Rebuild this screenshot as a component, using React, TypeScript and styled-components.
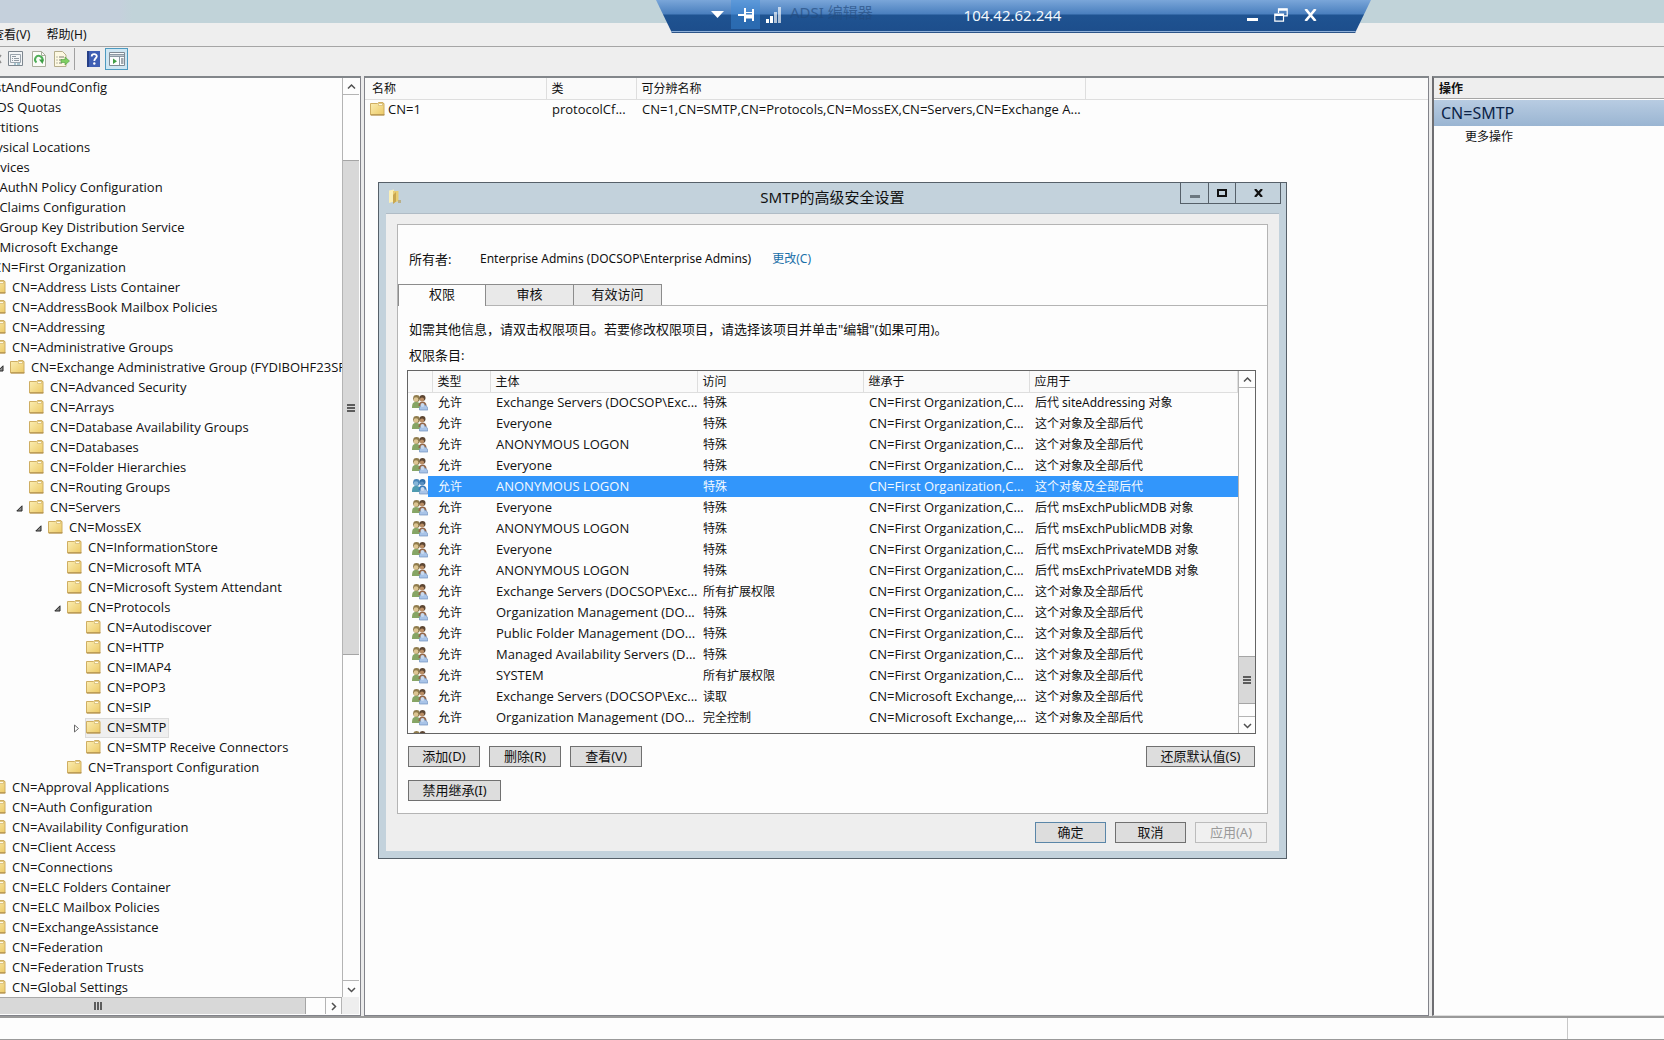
import React from 'react';
import styled, { createGlobalStyle, css } from 'styled-components';

const uiFont = `"Noto Sans", "Noto Sans CJK SC", sans-serif`;
const latinFont = `"Open Sans", "Noto Sans CJK SC", sans-serif`;

const GlobalStyle = createGlobalStyle`
  *, *::before, *::after { box-sizing: border-box; }
  body { margin: 0; background: #fdfdfd; color: #111; font: 12px/20px ${uiFont}; overflow: hidden; }
  button { font: inherit; color: inherit; padding: 0; margin: 0; border: 0; background: none; border-radius: 0; }
`;

const latinText = css`
  font-family: ${latinFont};
  font-size: 13px;
  line-height: 18px;
`;

/* ---------- application frame ---------- */

const Page = styled.div`
  position: relative;
  display: flex;
  flex-direction: column;
  height: 100vh;
  overflow: hidden;
`;

const TitleStrip = styled.div`
  flex: none;
  height: 23px;
  background: linear-gradient(90deg, #c5d0dc 0, #c5d0dc 120px, #c1d3d9 132px);
`;

const MenuBar = styled.nav`
  flex: none;
  display: flex;
  gap: 16px;
  height: 24px;
  padding-bottom: 1px;
  margin-left: -8px;
  background: #eeeeee;
  border-bottom: 1px solid #a5a5a5;
`;

const MenuItem = styled.button`
  line-height: 23px;
  white-space: nowrap;
`;

const ToolBar = styled.div`
  flex: none;
  display: flex;
  align-items: center;
  height: 29px;
  padding-bottom: 5px;
  background: #eeeeee;
`;

const Tool = styled.button<{ $active?: boolean; $w?: number }>`
  flex: none;
  display: flex;
  align-items: center;
  justify-content: center;
  width: ${p => p.$w ?? 23}px;
  height: 22px;
  ${p => p.$active && css`
    background: #cfe6f2;
    border: 1px solid #4d9ac0;
  `}
`;

const ToolDivider = styled.div`
  width: 1px;
  height: 22px;
  margin: 0 7px 0 1px;
  background: #a0a0a0;
`;

const Workspace = styled.div`
  flex: 1;
  min-height: 0;
  display: flex;
  gap: 3px;
  background: #ebebeb;
`;

const Pane = styled.section`
  display: flex;
  flex-direction: column;
  min-width: 0;
  background: #fdfdfd;
  border: 1px solid #82838a;
  border-top: 2px solid #82868a;
`;

const TreePane = styled(Pane)`
  flex: none;
  width: 361px;
  border-left: 0;
  padding-right: 1px;
`;

const ListPane = styled(Pane)`
  flex: 1;
`;

const ActionsPane = styled(Pane)`
  flex: none;
  width: 232px;
  border-left: 2px solid #6e6e72;
  border-right: 0;
  border-bottom-color: #dddddd;
`;

/* ---------- scroll bars ---------- */

const Bar = styled.div<{ $row?: boolean }>`
  flex: none;
  display: flex;
  flex-direction: ${p => (p.$row ? 'row' : 'column')};
  ${p => (p.$row ? 'height: 17px; border-top: 1px solid #a8a8a8;' : 'width: 17px; border-left: 1px solid #b4b4b4;')}
  background: #fdfdfd;
`;

const BarButton = styled.button`
  flex: none;
  display: flex;
  align-items: center;
  justify-content: center;
  width: 16px;
  height: 16px;
  border: 0 solid #b4b4b4;
`;

const UpButton = styled(BarButton)`border-bottom-width: 1px; height: 17px;`;
const DownButton = styled(BarButton)`border-top-width: 1px; height: 17px;`;
const RightButton = styled(BarButton)`border-width: 0 1px; width: 17px;`;

const Track = styled.div<{ $grow: number }>`
  flex: ${p => p.$grow} 1 0;
`;

const Thumb = styled.div<{ $grow: number }>`
  flex: ${p => p.$grow} 1 0;
  display: flex;
  align-items: center;
  justify-content: center;
  background: #d8d8d8;
  border: 1px solid #a5a5a5;
  border-width: 1px 0;
`;

const RowThumb = styled(Thumb)`
  padding-right: 110px;
  border-width: 0 1px 0 0;
`;

const Arrow = ({ d }: { d: string }) => (
  <svg width="9" height="9" viewBox="0 0 9 9" fill="none" stroke="#505050" strokeWidth="1.5" aria-hidden="true">
    <path d={d} />
  </svg>
);

const Grip = ({ vertical }: { vertical?: boolean }) => (
  <svg width="8" height="8" viewBox="0 0 8 8" fill="#5c5c5c" aria-hidden="true">
    {[0, 3, 6].map(n =>
      vertical ? <rect key={n} x={n} y="0" width="2" height="8" /> : <rect key={n} x="0" y={n} width="8" height="2" />,
    )}
  </svg>
);

const VerticalBar = ({ before, size, after }: { before: number; size: number; after: number }) => (
  <Bar>
    <UpButton aria-label="向上滚动"><Arrow d="M1 6.5 4.5 3 8 6.5" /></UpButton>
    <Track $grow={before} />
    <Thumb $grow={size}><Grip /></Thumb>
    <Track $grow={after} />
    <DownButton aria-label="向下滚动"><Arrow d="M1 3 4.5 6.5 8 3" /></DownButton>
  </Bar>
);

/* ---------- tree ---------- */

const TreeBody = styled.div`
  flex: 1;
  min-height: 0;
  display: flex;
`;

const TreeScroll = styled.div`
  flex: 1;
  min-width: 0;
  overflow: hidden;
`;

const TreeList = styled.ul`
  ${latinText}
  list-style: none;
  margin: 0 0 0 -83px;
  padding: 0;
`;

const TreeRow = styled.li<{ $level: number }>`
  display: flex;
  align-items: center;
  height: 20px;
  padding-left: ${p => p.$level * 19}px;
  white-space: nowrap;
`;

const Twisty = styled.span`
  flex: none;
  display: flex;
  justify-content: center;
  width: 16px;
  padding-right: 2px;
`;

const TreeNode = styled.span<{ $selected?: boolean }>`
  display: flex;
  align-items: center;
  gap: 6px;
  height: 20px;
  padding: 0 3px 2px 1px;
  ${p => p.$selected && css`
    background: #efefef;
    outline: 1px solid #dcdcdc;
    outline-offset: -1px;
  `}
`;

const TreeFooter = styled.div`
  flex: none;
  display: flex;
  margin-bottom: 1px;
  background: #eeeeee;
`;

const BottomBar = styled(Bar)`
  flex: 1;
  margin-right: 17px;
`;

const FolderIcon = () => (
  <svg width="15" height="14" viewBox="0 0 15 14" aria-hidden="true">
    <defs>
      <linearGradient id="folder" x1="0" y1="0" x2="1" y2="1">
        <stop offset="0" stopColor="#fbeeb4" />
        <stop offset="1" stopColor="#ecc965" />
      </linearGradient>
    </defs>
    <path d="M.5 1.500h7l1-1h4.500v1h1V13H.5z" fill="url(#folder)" stroke="#cfae62" />
    <path d="M8.500 1.500h4v2h-4z" fill="#fffbe6" stroke="#cfae62" strokeWidth=".6" />
    <path d="M1 12.9h13.5" stroke="#a88848" />
  </svg>
);

const OpenMark = () => (
  <svg width="7" height="7" viewBox="0 0 7 7" aria-hidden="true">
    <path d="M6 .8V6H.8z" fill="#8b8b8b" stroke="#262626" />
  </svg>
);

const ClosedMark = () => (
  <svg width="7" height="9" viewBox="0 0 7 9" aria-hidden="true">
    <path d="M1.500 1 5.500 4.500 1.500 8z" fill="#fff" stroke="#6a6a6a" />
  </svg>
);

type Node = [level: number, name: string, mark?: 'open' | 'closed'];

const nodes: Node[] = [
  [0, 'CN=LostAndFoundConfig'],
  [0, 'CN=NTDS Quotas'],
  [0, 'CN=Partitions'],
  [0, 'CN=Physical Locations'],
  [0, 'CN=Services', 'open'],
  [1, 'CN=AuthN Policy Configuration'],
  [1, 'CN=Claims Configuration'],
  [1, 'CN=Group Key Distribution Service'],
  [1, 'CN=Microsoft Exchange', 'open'],
  [2, 'CN=First Organization', 'open'],
  [3, 'CN=Address Lists Container'],
  [3, 'CN=AddressBook Mailbox Policies'],
  [3, 'CN=Addressing'],
  [3, 'CN=Administrative Groups', 'open'],
  [4, 'CN=Exchange Administrative Group (FYDIBOHF23SPDLT)', 'open'],
  [5, 'CN=Advanced Security'],
  [5, 'CN=Arrays'],
  [5, 'CN=Database Availability Groups'],
  [5, 'CN=Databases'],
  [5, 'CN=Folder Hierarchies'],
  [5, 'CN=Routing Groups'],
  [5, 'CN=Servers', 'open'],
  [6, 'CN=MossEX', 'open'],
  [7, 'CN=InformationStore'],
  [7, 'CN=Microsoft MTA'],
  [7, 'CN=Microsoft System Attendant'],
  [7, 'CN=Protocols', 'open'],
  [8, 'CN=Autodiscover'],
  [8, 'CN=HTTP'],
  [8, 'CN=IMAP4'],
  [8, 'CN=POP3'],
  [8, 'CN=SIP'],
  [8, 'CN=SMTP', 'closed'],
  [8, 'CN=SMTP Receive Connectors'],
  [7, 'CN=Transport Configuration'],
  [3, 'CN=Approval Applications'],
  [3, 'CN=Auth Configuration'],
  [3, 'CN=Availability Configuration'],
  [3, 'CN=Client Access'],
  [3, 'CN=Connections'],
  [3, 'CN=ELC Folders Container'],
  [3, 'CN=ELC Mailbox Policies'],
  [3, 'CN=ExchangeAssistance'],
  [3, 'CN=Federation'],
  [3, 'CN=Federation Trusts'],
  [3, 'CN=Global Settings'],
];

/* ---------- result list ---------- */

const ResultTable = styled.table`
  width: 100%;
  table-layout: fixed;
  border-collapse: collapse;

  th, td {
    height: 20px;
    padding: 0 0 0 6px;
    text-align: left;
    font-weight: 400;
    white-space: nowrap;
    overflow: hidden;
  }
  th {
    height: 21px;
    padding: 1px 0 0 5px;
    line-height: 19px;
    border-right: 1px solid #dedede;
    border-bottom: 1px solid #dedede;
    background: #fafafa;
  }
  td { ${latinText} padding-bottom: 2px; }
  th:last-child { border-right: 0; }
  th:first-child { padding-left: 7px; }
  td:first-child { padding-left: 5px; }
`;

const IconLabel = styled.span`
  display: flex;
  align-items: center;
  gap: 3px;
`;

/* ---------- actions pane ---------- */

const ActionsHeading = styled.h2`
  margin: 0;
  padding-left: 5px;
  height: 21px;
  font-size: 12px;
  line-height: 21px;
  background: #eeeeee;
  border-bottom: 1px solid #a5a5a5;
`;

const ActionsGroup = styled.h3`
  margin: 1px 0 0;
  padding: 1px 0 0 7px;
  font-size: 16px;
  font-weight: 400;
  line-height: 25px;
  color: #0c2448;
  background: linear-gradient(#b8cce2, #9ab5d2);
`;

const ActionItem = styled.button`
  align-self: flex-start;
  padding-left: 31px;
  line-height: 22px;
`;

const StatusBar = styled.footer`
  flex: none;
  display: flex;
  justify-content: flex-end;
  height: 24px;
  border-top: 2px solid #9a9a9a;
  border-bottom: 1px solid #9a9a9a;
  background: #fdfdfd;
`;

const StatusCell = styled.div`
  width: 97px;
  border-left: 1px solid #c8c8c8;
`;

/* ---------- remote session bar ---------- */

const SessionBar = styled.div`
  position: absolute;
  top: 0;
  left: 656px;
  width: 715px;
  height: 33px;
  padding: 0 54px 4px 48px;
  display: flex;
  align-items: center;
  justify-content: space-between;
  color: #f2f8fd;
  clip-path: polygon(0 0, 100% 0, 699px 100%, 16px 100%);
  background:
    linear-gradient(#2c5488, #2c5488) 0 100% / 100% 1px no-repeat,
    linear-gradient(#8fb0d8, #8fb0d8) 0 31px / 100% 1px no-repeat,
    linear-gradient(#7aa6d9 0, #4a7fbe 14px, #1f5391 15px, #1d4e8c 31px);
`;

const SessionGroup = styled.div<{ $end?: boolean }>`
  flex: 1 1 0;
  display: flex;
  align-items: center;
  height: 29px;
  gap: ${p => (p.$end ? 15 : 0)}px;
  justify-content: ${p => (p.$end ? 'flex-end' : 'flex-start')};
`;

const SessionButton = styled.button<{ $lit?: boolean; $w: number }>`
  display: flex;
  align-items: center;
  justify-content: center;
  align-self: stretch;
  width: ${p => p.$w}px;
  ${p => p.$lit && 'background: rgba(60, 140, 220, 0.45);'}
`;

const GhostTitle = styled.span`
  padding: 0 0 6px 3px;
  font-size: 15px;
  color: #234a7c;
  opacity: 0.65;
  white-space: nowrap;
`;

const Address = styled.span`
  padding-left: 4px;
  font-size: 15px;
`;

/* ---------- security dialog ---------- */

const Dialog = styled.section`
  position: absolute;
  left: 378px;
  top: 182px;
  width: 909px;
  padding: 0 7px 7px;
  border: 1px solid #566069;
  background: #c3d2dc;
  font-size: 13px;
`;

const Caption = styled.header`
  display: grid;
  grid-template-columns: 1fr auto 1fr;
  height: 30px;
`;

const CaptionTitle = styled.h1`
  margin: 0;
  font-size: 15px;
  font-weight: 400;
  line-height: 29px;
`;

const CaptionIcon = styled.span`
  padding: 6px 0 0 2px;
  line-height: 0;
`;

const CaptionButtons = styled.div`
  display: flex;
  justify-self: end;
  height: 21px;
  margin-right: -2px;
  border: 1px solid #566069;
  border-top: 0;
`;

const CaptionButton = styled.button<{ $w: number }>`
  display: flex;
  align-items: center;
  justify-content: center;
  width: ${p => p.$w}px;
  & + & { border-left: 1px solid #566069; }
`;

const Client = styled.div`
  padding: 10px 11px 8px;
  background: #eeeeee;
  border-top: 1px solid #b0bcc6;
`;

const Card = styled.div`
  background: #fdfdfd;
  border: 1px solid #b4b4b4;
`;

const OwnerRow = styled.div`
  display: flex;
  padding: 24px 11px 15px;
`;

const OwnerLabel = styled.span`
  width: 71px;
`;

const OwnerName = styled.span`
  margin-right: 21px;
  font-size: 12px;
`;

const ChangeLink = styled.a`
  color: #1a6fa8;
  font-size: 12px;
  text-decoration: none;
`;

const Tabs = styled.div`
  display: flex;
  height: 22px;
  border-bottom: 1px solid #b4b4b4;
`;

const Tab = styled.button<{ $active?: boolean }>`
  display: flex;
  justify-content: center;
  width: 88px;
  height: ${p => (p.$active ? 22 : 21)}px;
  line-height: 18px;
  border: 1px solid #8c8c8c;
  border-bottom: 0;
  border-left-width: ${p => (p.$active ? 1 : 0)}px;
  background: ${p => (p.$active ? '#fdfdfd' : '#e9e9e9')};
`;

const TabPage = styled.div`
  display: flex;
  flex-direction: column;
  padding: 13px 11px 12px 9px;
`;

const Hint = styled.p`
  margin: 0 0 6px 2px;
`;

const EntriesLabel = styled.div`
  margin: 0 0 5px 2px;
`;

const EntryFrame = styled.div`
  display: flex;
  height: 364px;
  border: 1px solid #646464;
  font-size: 12px;
`;

const EntryScroll = styled.div`
  flex: 1;
  min-width: 0;
  overflow: hidden;
`;

const EntryTable = styled.table`
  width: 100%;
  table-layout: fixed;
  border-collapse: collapse;

  th, td {
    height: 21px;
    padding: 0 0 0 6px;
    text-align: left;
    font-weight: 400;
    line-height: 20px;
    white-space: nowrap;
    overflow: hidden;
  }
  th {
    padding: 1px 0 0 5px;
    line-height: 19px;
    border-right: 1px solid #dedede;
    border-bottom: 1px solid #dedede;
    background: #fafafa;
  }
  td:first-child { padding-left: 4px; line-height: 0; }
`;

const EntryCell = styled.td<{ $latin: boolean }>`
  ${p => p.$latin && css`
    && {
      ${latinText}
      padding-bottom: 2px;
    }
  `}
`;

const EntryRow = styled.tr<{ $selected?: boolean }>`
  ${p => p.$selected && css`
    color: #f4faff;
    background: linear-gradient(90deg, #fdfdfd 20px, #3296fb 20px);
  `}
`;

const ButtonRow = styled.div<{ $top: number; $end?: boolean }>`
  display: flex;
  justify-content: ${p => (p.$end ? 'flex-end' : 'flex-start')};
  gap: 9px;
  margin: ${p => p.$top}px 1px 0;
`;

const PushButton = styled.button<{ $w?: number; $primary?: boolean; $push?: boolean }>`
  width: ${p => p.$w ?? 72}px;
  height: 21px;
  line-height: 19px;
  background: #dddddd;
  border: 1px solid ${p => (p.$primary ? '#5a86a8' : '#707070')};
  ${p => p.$push && 'margin-left: auto;'}
  &:disabled {
    color: #9a9a9a;
    background: #f0f0f0;
    border-color: #bcbcbc;
  }
`;

const UsersIcon = ({ tinted }: { tinted?: boolean }) => {
  const skin = tinted ? '#5a8fc0' : '#b98d64';
  const hair = tinted ? '#2f6ea8' : '#5d4632';
  return (
    <svg width="16" height="17" viewBox="0 0 16 17" aria-hidden="true">
      <path d="M0 14C0 9.500 1 8 4 8s5 1.500 5 6z" fill={tinted ? '#4f9bb0' : '#86a565'} />
      <circle cx="4.500" cy="4.500" r="3.400" fill={tinted ? '#4a86b8' : '#8f7b4c'} />
      <circle cx="4" cy="5.500" r="2.300" fill={tinted ? '#86b6d8' : '#dcc592'} />
      <path d="M6.500 12c0-3 1.500-4.500 4-4.500s4 1.500 4 4.500z" fill={tinted ? '#3c7cb8' : '#92674a'} />
      <circle cx="10.500" cy="4" r="3" fill={hair} />
      <circle cx="10" cy="5.500" r="2.100" fill={skin} />
      <path d="M7.500 16c-.5-3 1-5 4-5s4.500 2 4.300 5z" fill="#a9c4e8" stroke="#6d8fbd" strokeWidth=".7" />
      <circle cx="10.500" cy="11" r="2" fill="#c9d9ee" />
    </svg>
  );
};

const FO = 'CN=First Organization,C...';
const ME = 'CN=Microsoft Exchange,...';
const ALL = '这个对象及全部后代';

const entries: [string, string, string, string][] = [
  ['Exchange Servers (DOCSOP\\Exc...', '特殊', FO, '后代 siteAddressing 对象'],
  ['Everyone', '特殊', FO, ALL],
  ['ANONYMOUS LOGON', '特殊', FO, ALL],
  ['Everyone', '特殊', FO, ALL],
  ['ANONYMOUS LOGON', '特殊', FO, ALL],
  ['Everyone', '特殊', FO, '后代 msExchPublicMDB 对象'],
  ['ANONYMOUS LOGON', '特殊', FO, '后代 msExchPublicMDB 对象'],
  ['Everyone', '特殊', FO, '后代 msExchPrivateMDB 对象'],
  ['ANONYMOUS LOGON', '特殊', FO, '后代 msExchPrivateMDB 对象'],
  ['Exchange Servers (DOCSOP\\Exc...', '所有扩展权限', FO, ALL],
  ['Organization Management (DO...', '特殊', FO, ALL],
  ['Public Folder Management (DO...', '特殊', FO, ALL],
  ['Managed Availability Servers (D...', '特殊', FO, ALL],
  ['SYSTEM', '所有扩展权限', FO, ALL],
  ['Exchange Servers (DOCSOP\\Exc...', '读取', ME, ALL],
  ['Organization Management (DO...', '完全控制', ME, ALL],
];

const SecurityDialog = () => (
  <Dialog role="dialog" aria-labelledby="dialog-title">
    <Caption>
      <CaptionIcon>
        <svg width="14" height="16" viewBox="0 0 14 16" aria-hidden="true">
          <path d="M1 1.500 6 .5v12L1 14z" fill="#fbf0b8" />
          <path d="M5 2h5.500v10L5 14z" fill="#e8cd72" />
          <path d="M5 6 8 3v9.500L5 15z" fill="#c9a64e" />
          <path d="M10 11h3v3h-3z" fill="#b9b08a" />
        </svg>
      </CaptionIcon>
      <CaptionTitle id="dialog-title">SMTP的高级安全设置</CaptionTitle>
      <CaptionButtons>
        <CaptionButton $w={27} aria-label="最小化">
          <svg width="10" height="9" viewBox="0 0 10 9"><path d="M0 6h10v3H0z" fill="#6c7880" /></svg>
        </CaptionButton>
        <CaptionButton $w={27} aria-label="最大化">
          <svg width="10" height="8" viewBox="0 0 10 8"><path d="M1 1h8v6H1z" fill="none" stroke="#111" strokeWidth="2" /></svg>
        </CaptionButton>
        <CaptionButton $w={45} aria-label="关闭">
          <svg width="9" height="8" viewBox="0 0 9 8"><path d="M1 0 8 8M8 0 1 8" stroke="#111" strokeWidth="2.200" /></svg>
        </CaptionButton>
      </CaptionButtons>
    </Caption>
    <Client>
      <Card>
        <OwnerRow>
          <OwnerLabel>所有者:</OwnerLabel>
          <OwnerName>Enterprise Admins (DOCSOP\Enterprise Admins)</OwnerName>
          <ChangeLink href="#owner">更改(C)</ChangeLink>
        </OwnerRow>
        <Tabs role="tablist">
          <Tab role="tab" aria-selected="true" $active>权限</Tab>
          <Tab role="tab" aria-selected="false">审核</Tab>
          <Tab role="tab" aria-selected="false">有效访问</Tab>
        </Tabs>
        <TabPage>
          <Hint>如需其他信息，请双击权限项目。若要修改权限项目，请选择该项目并单击"编辑"(如果可用)。</Hint>
          <EntriesLabel id="entries-label">权限条目:</EntriesLabel>
          <EntryFrame>
            <EntryScroll>
              <EntryTable aria-labelledby="entries-label">
                <colgroup>
                  <col style={{ width: 24 }} />
                  <col style={{ width: 58 }} />
                  <col style={{ width: 207 }} />
                  <col style={{ width: 166 }} />
                  <col style={{ width: 166 }} />
                  <col />
                </colgroup>
                <thead>
                  <tr>
                    <th />
                    <th>类型</th>
                    <th>主体</th>
                    <th>访问</th>
                    <th>继承于</th>
                    <th>应用于</th>
                  </tr>
                </thead>
                <tbody>
                  {entries.map((entry, i) => (
                    <EntryRow key={i} $selected={i === 4}>
                      <td><UsersIcon tinted={i === 4} /></td>
                      <td>允许</td>
                      {entry.map((text, c) => (
                        <EntryCell key={c} $latin={c === 0 || c === 2}>{text}</EntryCell>
                      ))}
                    </EntryRow>
                  ))}
                  <EntryRow><td colSpan={6}><UsersIcon /></td></EntryRow>
                </tbody>
              </EntryTable>
            </EntryScroll>
            <VerticalBar before={270} size={47} after={12} />
          </EntryFrame>
          <ButtonRow $top={12}>
            <PushButton>添加(D)</PushButton>
            <PushButton>删除(R)</PushButton>
            <PushButton>查看(V)</PushButton>
            <PushButton $w={109} $push>还原默认值(S)</PushButton>
          </ButtonRow>
          <ButtonRow $top={13}>
            <PushButton $w={93}>禁用继承(I)</PushButton>
          </ButtonRow>
        </TabPage>
      </Card>
      <ButtonRow $top={8} $end>
        <PushButton $w={71} $primary>确定</PushButton>
        <PushButton $w={71}>取消</PushButton>
        <PushButton disabled>应用(A)</PushButton>
      </ButtonRow>
    </Client>
  </Dialog>
);

const App = () => (
  <Page>
    <GlobalStyle />
    <TitleStrip />
    <MenuBar>
      <MenuItem>查看(V)</MenuItem>
      <MenuItem>帮助(H)</MenuItem>
    </MenuBar>
    <ToolBar>
      <Tool $w={4} aria-label="删除">
        <svg width="4" height="14" viewBox="0 0 4 14"><path d="M1 3-3 9M-2 6 1 11" stroke="#8e8e8e" strokeWidth="1.500" /></svg>
      </Tool>
      <Tool aria-label="属性">
        <svg width="15" height="16" viewBox="0 0 15 16" fill="none">
          <path d="M.5.5h14v14H.5z" fill="#f3f5f7" stroke="#7d868e" />
          <path d="M2.500 3.500h10v8h-10z" stroke="#9aa4ad" />
          <path d="M4 5.500h4M6 7.500h5M6 9.500h5M4 7.500h1M4 9.500h1" stroke="#8f99a2" />
          <path d="M6 13h2M9 13h3" stroke="#8fb6c4" strokeWidth="1.500" />
        </svg>
      </Tool>
      <Tool aria-label="刷新">
        <svg width="14" height="16" viewBox="0 0 14 16" fill="none">
          <path d="M.5.5h9l4 4v11H.5z" fill="#fbfcf8" stroke="#a9ad9c" />
          <path d="M9.500.5v4h4" stroke="#a9ad9c" />
          <path d="M4.500 11.500A3.700 3.700 0 1 1 10.200 10" stroke="#4fae58" strokeWidth="2" />
          <path d="M7 8.500h5l-1.500 4.500z" fill="#3c9e45" />
        </svg>
      </Tool>
      <Tool aria-label="导出列表">
        <svg width="16" height="16" viewBox="0 0 16 16" fill="none">
          <path d="M.5.5h8l3.500 3.500v11.500H.5z" fill="#fdf9e2" stroke="#b5ae8c" />
          <path d="M2.500 6h1M2.500 9h1M2.500 12h1M5 6h5M5 9h3M5 12h3" stroke="#7d7d72" />
          <path d="M7 8.500h4V6l4.500 4-4.500 4v-2.500H7z" fill="#7fcf62" stroke="#4f9b40" strokeWidth=".6" />
        </svg>
      </Tool>
      <ToolDivider />
      <Tool aria-label="帮助">
        <svg width="13" height="16" viewBox="0 0 13 16" fill="none">
          <path d="M0 0h13v16H0z" fill="#3f5fb4" />
          <path d="M0 0h2v16H0z" fill="#253f86" />
          <path d="M4.700 5.500C4.700 2.500 9.800 2.500 9.800 5.300 9.800 7.300 7.300 7.300 7.300 10" stroke="#fff" strokeWidth="1.800" />
          <circle cx="7.300" cy="12.500" r="1.200" fill="#fff" />
        </svg>
      </Tool>
      <Tool $active aria-label="显示或隐藏操作窗格">
        <svg width="16" height="14" viewBox="0 0 16 14" fill="none">
          <path d="M.5.5h15v13H.5z" fill="#fafcfd" stroke="#7f8a93" />
          <path d="M1 2h14v1.500H1z" fill="#8b98a3" />
          <path d="M1 4.500h14M10.500 5v8" stroke="#8b98a3" />
          <path d="M4 6.500 8 9.200 4 12z" fill="#3f9e44" />
          <path d="M12 7h2.500M12 9h2.500M12 11h2.500" stroke="#4a5864" />
        </svg>
      </Tool>
    </ToolBar>

    <Workspace>
      <TreePane>
        <TreeBody>
          <TreeScroll>
            <TreeList role="tree">
              {nodes.map(([level, name, mark]) => (
                <TreeRow key={name} $level={level} role="treeitem">
                  <Twisty>
                    {mark === 'open' && <OpenMark />}
                    {mark === 'closed' && <ClosedMark />}
                  </Twisty>
                  <TreeNode $selected={name === 'CN=SMTP'}>
                    <FolderIcon />
                    {name}
                  </TreeNode>
                </TreeRow>
              ))}
            </TreeList>
          </TreeScroll>
          <VerticalBar before={65} size={496} after={326} />
        </TreeBody>
        <TreeFooter>
          <BottomBar $row>
            <RowThumb $grow={195}><Grip vertical /></RowThumb>
            <Track $grow={19} />
            <RightButton aria-label="向右滚动"><Arrow d="M3 1 6.500 4.500 3 8" /></RightButton>
          </BottomBar>
        </TreeFooter>
      </TreePane>

      <ListPane>
        <ResultTable>
          <colgroup>
            <col style={{ width: 181 }} />
            <col style={{ width: 90 }} />
            <col style={{ width: 449 }} />
            <col />
          </colgroup>
          <thead>
            <tr>
              <th>名称</th>
              <th>类</th>
              <th>可分辨名称</th>
              <th />
            </tr>
          </thead>
          <tbody>
            <tr>
              <td><IconLabel><FolderIcon />CN=1</IconLabel></td>
              <td>protocolCf...</td>
              <td>CN=1,CN=SMTP,CN=Protocols,CN=MossEX,CN=Servers,CN=Exchange A...</td>
              <td />
            </tr>
          </tbody>
        </ResultTable>
      </ListPane>

      <ActionsPane>
        <ActionsHeading>操作</ActionsHeading>
        <ActionsGroup>CN=SMTP</ActionsGroup>
        <ActionItem>更多操作</ActionItem>
      </ActionsPane>
    </Workspace>

    <StatusBar><StatusCell /></StatusBar>

    <SecurityDialog />

    <SessionBar>
      <SessionGroup>
        <SessionButton $w={27} aria-label="菜单">
          <svg width="13" height="7" viewBox="0 0 13 7"><path d="M0 0h13L6.500 7z" fill="#fff" /></svg>
        </SessionButton>
        <SessionButton $w={29} $lit aria-label="固定">
          <svg width="16" height="14" viewBox="0 0 16 14" fill="none" stroke="#fff" strokeWidth="2">
            <path d="M0 7h6M7 0v14M15 1v12" />
            <path d="M7 4.500h8" strokeWidth="1" />
            <path d="M7 8.500h8" strokeWidth="4" />
          </svg>
        </SessionButton>
        <SessionButton $w={27} aria-label="连接质量">
          <svg width="15" height="16" viewBox="0 0 15 16" fill="#fff">
            <path d="M0 12h3v4H0zM4 9h3v7H4z" />
            <path d="M8 5h3v11H8zM12 0h3v16h-3z" opacity=".65" />
          </svg>
        </SessionButton>
        <GhostTitle>ADSI 编辑器</GhostTitle>
      </SessionGroup>
      <Address>104.42.62.244</Address>
      <SessionGroup $end>
        <SessionButton $w={13} aria-label="最小化">
          <svg width="11" height="13" viewBox="0 0 11 13"><path d="M0 10h11v3H0z" fill="#fff" /></svg>
        </SessionButton>
        <SessionButton $w={14} aria-label="还原">
          <svg width="14" height="14" viewBox="0 0 14 14" fill="none" stroke="#fff" strokeWidth="1.200">
            <path d="M4.500 5V.8h8.700v7H9.500M.8 6h8.700v7.200H.8z" />
            <path d="M4.500 1.800h8.700M.8 7h8.700" strokeWidth="2" />
          </svg>
        </SessionButton>
        <SessionButton $w={14} aria-label="关闭">
          <svg width="13" height="12" viewBox="0 0 13 12"><path d="M1.500 0 11.500 12M11.500 0 1.500 12" stroke="#fff" strokeWidth="2.600" /></svg>
        </SessionButton>
      </SessionGroup>
    </SessionBar>
  </Page>
);

export default App;
